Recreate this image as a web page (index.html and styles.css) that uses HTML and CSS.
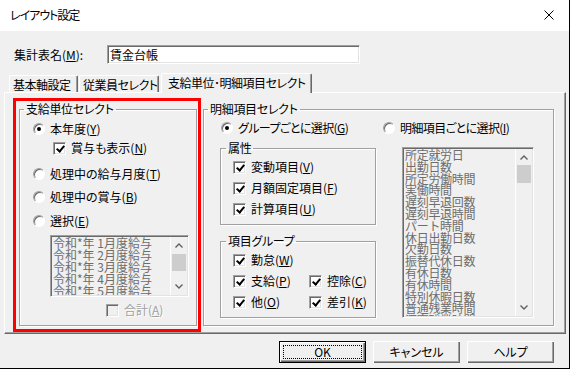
FILE: index.html
```html
<!DOCTYPE html>
<html lang="ja">
<head>
  <meta charset="UTF-8" />
  <title>レイアウト設定</title>
  <link rel="stylesheet" href="styles.css">
</head>
<body>
  <div class="window">
    <div class="titlebar">
      <span class="title">レイアウト設定</span>
      <svg class="close" width="10" height="10" viewBox="0 0 10 10">
        <path d="M0.5 0.5 L9.5 9.5 M9.5 0.5 L0.5 9.5" stroke="#000" stroke-width="1" fill="none"/>
      </svg>
    </div>

    <div class="content">
      <div class="name-row">
        <span class="name-label">集計表名(<u>M</u>):</span>
        <div class="textbox">賃金台帳</div>
      </div>

      <div class="tabs">
        <div class="tab tab-basic">基本軸設定</div>
        <div class="tab tab-staff">従業員セレクト</div>
        <div class="tab tab-pay selected">支給単位･明細項目セレクト</div>
      </div>

      <div class="panel">
        <!-- red highlight around the pay unit group -->
        <div class="highlight">
          <fieldset class="group pay-group">
            <legend>支給単位セレクト</legend>
            <div class="pay-body">
              <div class="opt"><span class="radio on"></span>本年度(<u>Y</u>)</div>
              <div class="opt sub"><span class="check on"></span>賞与も表示(<u>N</u>)</div>
              <div class="opt gap10"><span class="radio"></span>処理中の給与月度(<u>T</u>)</div>
              <div class="opt gap7"><span class="radio"></span>処理中の賞与(<u>B</u>)</div>
              <div class="opt gap8"><span class="radio"></span>選択(<u>E</u>)</div>
              <div class="listbox month-list">
                <div class="list-items">
                  <div>令和*年 1月度給与</div>
                  <div>令和*年 2月度給与</div>
                  <div>令和*年 3月度給与</div>
                  <div>令和*年 4月度給与</div>
                  <div>令和*年 5月度給与</div>
                </div>
                <div class="scrollbar">
                  <div class="arrow"><svg width="8" height="5" viewBox="0 0 8 5"><path d="M0.5 4.5 L4 1 L7.5 4.5" stroke="#606060" stroke-width="1.4" fill="none"/></svg></div>
                  <div class="thumb thumb-small"></div>
                  <div class="arrow down"><svg width="8" height="5" viewBox="0 0 8 5"><path d="M0.5 0.5 L4 4 L7.5 0.5" stroke="#606060" stroke-width="1.4" fill="none"/></svg></div>
                </div>
              </div>
              <div class="opt total disabled"><span class="check off"></span>合計(<u>A</u>)</div>
            </div>
          </fieldset>
        </div>

        <fieldset class="group item-group">
          <legend>明細項目セレクト</legend>
          <div class="item-body">
            <div class="item-left">
              <div class="opt first narrow"><span class="radio on"></span>グループごとに選択(<u>G</u>)</div>

              <fieldset class="group sub-group attr">
                <legend>属性</legend>
                <div class="sub-body">
                  <div class="opt"><span class="check on"></span>変動項目(<u>V</u>)</div>
                  <div class="opt"><span class="check on"></span>月額固定項目(<u>F</u>)</div>
                  <div class="opt"><span class="check on"></span>計算項目(<u>U</u>)</div>
                </div>
              </fieldset>

              <fieldset class="group sub-group kind">
                <legend>項目グループ</legend>
                <div class="sub-body grid">
                  <div class="opt wide"><span class="check on"></span>勤怠(<u>W</u>)</div>
                  <div class="opt"><span class="check on"></span>支給(<u>P</u>)</div>
                  <div class="opt"><span class="check on"></span>控除(<u>C</u>)</div>
                  <div class="opt"><span class="check on"></span>他(<u>O</u>)</div>
                  <div class="opt"><span class="check on"></span>差引(<u>K</u>)</div>
                </div>
              </fieldset>
            </div>

            <div class="item-right">
              <div class="opt narrow"><span class="radio"></span>明細項目ごとに選択(<u>I</u>)</div>
              <div class="listbox detail-list">
                <div class="list-items">
                  <div>所定就労日</div>
                  <div>出勤日数</div>
                  <div>所定労働時間</div>
                  <div>実働時間</div>
                  <div>遅刻早退回数</div>
                  <div>遅刻早退時間</div>
                  <div>パート時間</div>
                  <div>休日出勤日数</div>
                  <div>欠勤日数</div>
                  <div>振替代休日数</div>
                  <div>有休日数</div>
                  <div>有休時間</div>
                  <div>特別休暇日数</div>
                  <div>普通残業時間</div>
                  <div>深夜残業時間</div>
                </div>
                <div class="scrollbar">
                  <div class="arrow"><svg width="8" height="5" viewBox="0 0 8 5"><path d="M0.5 4.5 L4 1 L7.5 4.5" stroke="#606060" stroke-width="1.4" fill="none"/></svg></div>
                  <div class="thumb thumb-tall"></div>
                  <div class="arrow down"><svg width="8" height="5" viewBox="0 0 8 5"><path d="M0.5 0.5 L4 4 L7.5 0.5" stroke="#606060" stroke-width="1.4" fill="none"/></svg></div>
                </div>
              </div>
            </div>
          </div>
        </fieldset>
      </div>

      <div class="buttons">
        <div class="btn default"><span class="focus">OK</span></div>
        <div class="btn">キャンセル</div>
        <div class="btn">ヘルプ</div>
      </div>
    </div>
  </div>
</body>
</html>
```

FILE: styles.css
```css
* { margin: 0; padding: 0; box-sizing: border-box; }
html, body {
  width: 570px;
  height: 369px;
  overflow: hidden;
}
body {
  font: 12px/14px "Noto Sans CJK JP", "Noto Sans", sans-serif;
  font-feature-settings: "palt";
  color: #000;
  background: #f0f0f0;
}
u { text-decoration: underline; text-underline-offset: 1px; }

.window {
  width: 570px;
  height: 369px;
  border-right: 1px solid #000;
  border-bottom: 1px solid #000;
  background: #f0f0f0;
}

/* title bar */
.titlebar {
  height: 31px;
  background: #fff;
  display: flex;
  align-items: center;
  padding: 0 15px 1px 10px;
}
.title { flex: 1; letter-spacing: -1px; }
.close { display: block; margin-top: -1px; }

.content { padding: 0 3px 0 4px; }

/* name row */
.name-row {
  display: flex;
  align-items: center;
  margin-top: 14px;
  height: 19px;
  padding-left: 10px;
}
.name-label { width: 93px; }
.textbox {
  width: 253px;
  height: 19px;
  background: #fff;
  border: 1px solid;
  border-color: #a0a0a0 #fff #fff #a0a0a0;
  box-shadow: inset 1px 1px 0 #696969, inset -1px -1px 0 #e3e3e3;
  padding: 1px 0 0 2px;
  line-height: 15px;
}

/* tabs */
.tabs {
  display: flex;
  align-items: flex-end;
  margin-top: 9px;
  height: 19px;
  padding-left: 5px;
}
.tab {
  height: 17px;
  border: 1px solid #fff;
  border-right: 1px solid #696969;
  border-bottom: none;
  box-shadow: inset -1px 0 0 #a0a0a0;
  padding: 1px 0 0 3px;
  line-height: 15px;
  border-radius: 2px 2px 0 0;
  white-space: nowrap;
  overflow: hidden;
  letter-spacing: -0.5px;
}
.tab-basic { width: 69px; }
.tab-staff { width: 80px; margin-left: 1px; }
.tab-pay { width: 151px; margin-left: 2px; }
.tab.selected {
  height: 20px;
  margin-bottom: -1px;
  background: #f0f0f0;
  position: relative;
  z-index: 1;
  padding: 1px 0 0 6px;
}

/* tab page */
.panel {
  display: flex;
  align-items: flex-start;
  height: 242px;
  border: 1px solid;
  border-color: #fff #696969 #696969 #fff;
  box-shadow: inset -1px -1px 0 #a0a0a0;
  padding: 5px 0 0 8px;
}

.highlight {
  width: 188px;
  height: 234px;
  border: 3px solid #f00;
}

fieldset.group {
  border: 1px solid #a0a0a0;
  box-shadow: inset 1px 1px 0 #fff, 1px 1px 0 #fff;
  min-width: 0;
}
fieldset.group legend {
  padding: 0 2px;
  margin-left: 4px;
  line-height: 14px;
  letter-spacing: -0.3px;
}

.pay-group {
  margin: 1px 1px 0 3px;
  height: 224px;
}
.pay-body { padding: 5px 0 0 13px; }

.item-group {
  margin: 4px 0 0 2px;
  width: 351px;
  height: 224px;
}

.opt {
  display: flex;
  align-items: center;
  height: 16px;
  white-space: nowrap;
}
.opt.narrow { letter-spacing: -0.6px; }
.opt.sub { margin: 3px 0 0 20px; }
.opt.gap10 { margin-top: 10px; }
.opt.gap7 { margin-top: 7px; }
.opt.gap8 { margin-top: 8px; }
.opt.total { margin: 5px 0 0 73px; }
.opt.disabled { color: #a0a0a0; text-shadow: 1px 1px 0 #fff; }

/* radio buttons and check boxes */
.radio {
  position: relative;
  width: 12px;
  height: 12px;
  border-radius: 50%;
  border: 1px solid;
  border-color: #a0a0a0 #fff #fff #a0a0a0;
  box-shadow: inset 1px 1px 0 #696969;
  background: #fff;
  margin-right: 5px;
  flex: none;
}
.radio.on::after {
  content: "";
  position: absolute;
  left: 3px;
  top: 3px;
  width: 4px;
  height: 4px;
  border-radius: 50%;
  background: #000;
}
.check {
  position: relative;
  width: 13px;
  height: 13px;
  border: 1px solid;
  border-color: #a0a0a0 #fff #fff #a0a0a0;
  box-shadow: inset 1px 1px 0 #696969, inset -1px -1px 0 #e3e3e3;
  background: #fff;
  margin-right: 5px;
  flex: none;
}
.check.off { background: #f0f0f0; }
.check.on::after {
  content: "";
  position: absolute;
  left: 3px;
  top: 1px;
  width: 3px;
  height: 6px;
  border: solid #000;
  border-width: 0 2px 2px 0;
  transform: translate(1px, 0) rotate(40deg);
}

/* list boxes */
.listbox {
  display: flex;
  border: 1px solid;
  border-color: #a0a0a0 #fff #fff #a0a0a0;
  box-shadow: inset 1px 1px 0 #696969, inset -1px -1px 0 #e3e3e3;
  padding: 1px;
  background: #f0f0f0;
  overflow: hidden;
}
.list-items {
  flex: 1;
  color: #6d6d6d;
  line-height: 11.8px;
  font-feature-settings: normal;
  overflow: hidden;
  white-space: nowrap;
  padding-left: 1px;
}
.month-list {
  margin: 6px 0 0 17px;
  width: 139px;
  height: 62px;
}
.month-list .list-items { line-height: 12px; }
.detail-list {
  margin: 11px 0 0 19px;
  width: 132px;
  height: 171px;
}
.detail-list .list-items { letter-spacing: -0.3px; }

.scrollbar {
  width: 17px;
  display: flex;
  flex-direction: column;
  border-left: 1px solid #fff;
  background: #f0f0f0;
}
.arrow {
  height: 17px;
  display: flex;
  align-items: center;
  justify-content: center;
}
.arrow svg { display: block; }
.arrow.down { margin-top: auto; }
.thumb {
  margin: 0 1px;
  background: #cdcdcd;
}
.thumb-small { height: 17px; }
.thumb-tall { height: 18px; margin-top: -1px; }

/* detail group */
.item-body {
  display: flex;
  padding: 4px 0 0 16px;
}
.item-left { width: 156px; }
.item-left .opt.first { margin-left: 1px; }
.item-right { margin-left: 7px; }

.sub-group { width: 156px; height: 84px; }
.sub-group.attr { margin-top: 5px; }
.sub-group.kind { margin-top: 9px; }
fieldset.sub-group legend { margin-left: 5px; }
.sub-body {
  display: flex;
  flex-direction: column;
  gap: 5px;
  padding: 4px 0 0 12px;
}
.sub-body.grid {
  display: grid;
  grid-template-columns: 71px auto;
  row-gap: 5px;
}
.sub-body .wide { grid-column: 1 / 3; }

/* dialog buttons */
.buttons {
  display: flex;
  justify-content: flex-end;
  gap: 7px;
  margin-top: 7px;
  padding-right: 12px;
}
.btn {
  width: 87px;
  height: 22px;
  display: flex;
  align-items: center;
  justify-content: center;
  background: #f0f0f0;
  box-shadow: inset 1px 1px 0 #fff, inset -1px -1px 0 #696969, inset -2px -2px 0 #a0a0a0;
}
.btn.default {
  border: 1px solid #000;
  padding: 3px;
}
.btn .focus {
  flex: 1;
  align-self: stretch;
  display: flex;
  align-items: center;
  justify-content: center;
  outline: 1px dotted #000;
  outline-offset: -1px;
}
```
